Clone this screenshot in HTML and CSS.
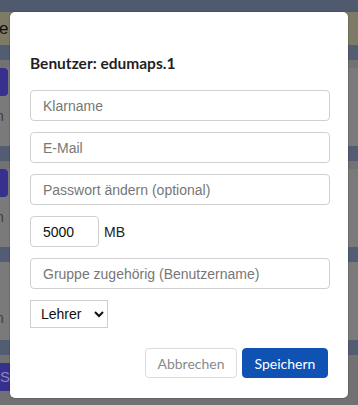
FILE: index.html
```html
<!DOCTYPE html>
<html>
<head>
<meta charset="utf-8">
<title>Benutzer bearbeiten</title>
<link rel="stylesheet" href="styles.css">
</head>
<body>
<div class="page">
	<div class="topbar"></div>
	<div class="banner"><span>e</span></div>
	<div class="card">
		<div class="card-head"></div>
		<div class="card-body"><div class="btn-purple"></div><span class="note">n</span></div>
	</div>
	<div class="card">
		<div class="card-head"></div>
		<div class="card-body"><div class="btn-purple"></div><span class="note">n</span></div>
	</div>
	<div class="card">
		<div class="card-head"></div>
		<div class="card-body"><div class="btn-space"></div><span class="note">n</span></div>
	</div>
	<div class="card last">
		<div class="card-head"></div>
		<div class="card-body"><div class="btn-purple">Sa</div><span class="note">n</span></div>
	</div>
</div>

<div class="modal">
	<h3 class="modal-title">Benutzer: edumaps.1</h3>
	<form class="modal-form">
		<input class="field" type="text" placeholder="Klarname">
		<input class="field" type="text" placeholder="E-Mail">
		<input class="field" type="password" placeholder="Passwort ändern (optional)">
		<div class="quota"><input class="field small" type="text" value="5000"><span>MB</span></div>
		<input class="field" type="text" placeholder="Gruppe zugehörig (Benutzername)">
		<div class="role">
			<select class="select">
				<option>Lehrer</option>
				<option>Schüler</option>
			</select>
		</div>
		<div class="actions">
			<button type="button" class="btn btn-cancel">Abbrechen</button>
			<button type="button" class="btn btn-save">Speichern</button>
		</div>
	</form>
</div>
</body>
</html>
```

FILE: styles.css
```css
html,body{margin:0;padding:0;overflow:hidden;}
body{background:#727272;font-family:"Liberation Sans",Arial,sans-serif;}
.page{width:358px;height:405px;overflow:hidden;}
.topbar{height:12px;background:#505a6e;}
.banner{height:33px;background:#7d7a66;font-size:17px;line-height:33px;color:#111;}
.banner span{margin-left:-1px;}
.card-head{height:15px;background:#525d74;}
.card-body{height:78px;background:#7a7a7a;}
.card.last .card-body{height:65px;background:#717171;}
.card-body .btn-purple{margin-left:-10px;margin-top:8px;width:18px;height:28px;border-radius:4px;background:#38308f;color:#8b86b8;font-size:15px;line-height:28px;text-indent:10px;overflow:hidden;}
.card.last .card-body .btn-purple{width:30px;}
.card-body .btn-space{height:36px;}
.card-body .note{display:block;margin-top:12px;font-size:14px;line-height:16px;color:#3d3d3d;margin-left:-4px;}

.modal{position:absolute;left:10px;top:12px;width:298px;height:346px;padding:20px;background:#fff;border-radius:5px;box-shadow:0 0 0 1px rgba(0,0,0,0.12);}
.modal-title{margin:21px 0 0;font-family:Lato,"Liberation Sans",sans-serif;font-weight:700;font-size:15.5px;line-height:20px;color:#1f1f1f;}
.modal-form{margin-top:17px;display:flex;flex-direction:column;gap:11px;}
.field{box-sizing:border-box;width:300px;height:31px;margin:0;padding:0 12px;border:1px solid #cfcfcf;border-radius:4px;font-family:"Liberation Sans",Arial,sans-serif;font-size:14px;color:#111;outline:none;background:#fff;}
.field::placeholder{color:#777;}
.quota{display:flex;align-items:center;gap:5px;font-size:14px;color:#222;}
.field.small{width:69px;}
.select{box-sizing:border-box;width:78px;height:28px;border:1px solid #cfcfcf;border-radius:0;background:#fff;font-family:"Liberation Sans",Arial,sans-serif;font-size:14px;color:#111;padding:0 6px;}
.actions{margin-top:9px;display:flex;justify-content:flex-end;gap:5px;}
.btn{box-sizing:border-box;height:30px;border-radius:4px;font-family:Lato,"Liberation Sans",sans-serif;font-size:14px;padding:0 8px;cursor:pointer;}
.btn-cancel{background:#fff;border:1px solid #dcdcdc;color:#8a8a8a;width:92px;}
.btn-save{background:#0f52b4;border:1px solid #0f52b4;color:#fff;width:86px;}
```
